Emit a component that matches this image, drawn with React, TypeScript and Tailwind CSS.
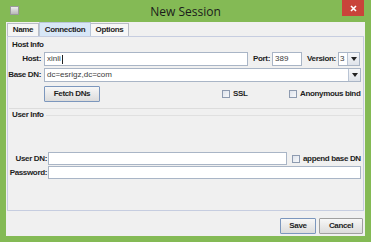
const label = "font-bold text-[8px] leading-[10px] tracking-[-0.35px] text-[#1e1e1e] whitespace-nowrap";
const field = "h-full bg-white border border-[#a9b5c6] text-[8px] leading-[12px] px-[2px] text-[#3a3a3a] whitespace-nowrap overflow-hidden";

function Arrow() {
  return (
    <div className="w-[12px] h-full flex items-center justify-center bg-gradient-to-b from-[#f6f7f9] to-[#dfe3ea] border-l border-[#b9c4d4]">
      <svg width="6" height="4" viewBox="0 0 6 4">
        <path d="M0 0 L6 0 L3 4 Z" fill="#222" />
      </svg>
    </div>
  );
}

function Check({ text, className = "" }: { text: string; className?: string }) {
  return (
    <div className={`flex items-center gap-[3px] ${className}`}>
      <div className="w-[8px] h-[8px] border border-[#8e9bb0] bg-gradient-to-br from-[#dfe4ec] to-[#f7f8fa]" />
      <span className={label}>{text}</span>
    </div>
  );
}

function Button({ text, width, primary }: { text: string; width: string; primary?: boolean }) {
  return (
    <div
      className={`${width} h-[16px] flex items-center justify-center bg-gradient-to-b from-[#f7f7f7] to-[#dcdcdc] border ${
        primary ? "border-[#7c97bd]" : "border-[#a0a0a0]"
      } rounded-[1px]`}
    >
      <span className={label}>{text}</span>
    </div>
  );
}

export default function App() {
  return (
    <div className="w-[371px] h-[242px] bg-[#84ba55] flex flex-col overflow-hidden font-['Liberation_Sans',sans-serif]">
      {/* title bar */}
      <div className="h-[22px] grid grid-cols-[1fr_auto_1fr]">
        <div className="flex items-start pl-[10px] pt-[6px]">
          <div className="w-[9px] h-[9px] bg-gradient-to-b from-[#eeeeee] to-[#b8b8b8] border border-[#9a9a9a]" />
        </div>
        <div className="flex items-center pt-[1px] font-['Open_Sans',sans-serif] text-[12px] text-[#1b1b1b]">
          New Session
        </div>
        <div className="flex justify-end pr-[7px]">
          <div className="w-[22px] h-[16px] bg-[#c9443a] flex items-center justify-center">
            <svg width="7" height="7" viewBox="0 0 7 7">
              <path d="M1 1 L6 6 M6 1 L1 6" stroke="#fff" strokeWidth="1.6" />
            </svg>
          </div>
        </div>
      </div>

      {/* body */}
      <div className="mx-[6px] h-[214px] bg-[#f0f0f0] flex flex-col">
        {/* tabs */}
        <div className="h-[14px] flex items-end pl-[1px]">
          <div className="w-[32px] h-[13px] border border-b-0 border-[#b9bdc6] bg-[#f5f5f5] flex items-center justify-center">
            <span className={label}>Name</span>
          </div>
          <div className="w-[52px] h-[14px] border border-b-0 border-[#b9c6d8] bg-[#d8e7f7] flex items-center justify-center">
            <span className={label}>Connection</span>
          </div>
          <div className="w-[38px] h-[13px] border border-b-0 border-l-0 border-[#b9bdc6] bg-[#f7f7f7] flex items-center justify-center">
            <span className={label}>Options</span>
          </div>
        </div>

        {/* panel */}
        <div className="mx-[1px] h-[175px] border border-[#c6cde0] flex flex-col">
          <div className="flex pl-[4px] pt-[3px]">
            <span className={label}>Host Info</span>
          </div>

          <div className="mt-[2px] h-[14px] flex items-center">
            <span className={`${label} w-[33px] text-right`}>Host:</span>
            <div className={`${field} ml-[3px] w-[204px] border-[#9da3ad] flex items-center`}>
              xinli<span className="w-px h-[9px] bg-[#222] ml-[1px]" />
            </div>
            <span className={`${label} w-[24px] text-right pr-[2px]`}>Port:</span>
            <div className={`${field} w-[30px]`}>389</div>
            <span className={`${label} ml-[5px] w-[31px]`}>Version:</span>
            <div className="h-full w-[22px] flex border border-[#a9b5c6] bg-white">
              <div className="flex-1 text-[8px] leading-[12px] px-[1px] text-[#3a3a3a]">3</div>
              <Arrow />
            </div>
          </div>

          <div className="mt-[2px] h-[14px] flex items-center">
            <span className={`${label} w-[33px] text-right`}>Base DN:</span>
            <div className="ml-[3px] w-[317px] h-full flex border border-[#a9b5c6] bg-white">
              <div className="flex-1 text-[8px] leading-[12px] px-[2px] text-[#3a3a3a]">dc=esrigz,dc=com</div>
              <Arrow />
            </div>
          </div>

          <div className="mt-[4px] h-[16px] flex items-center">
            <div className="ml-[36px]">
              <Button text="Fetch DNs" width="w-[56px]" primary />
            </div>
            <Check text="SSL" className="ml-[122px] w-[67px]" />
            <Check text="Anonymous bind" />
          </div>

          <div className="mt-[6px] mx-[1px] h-px bg-[#dcdcdc]" />
          <div className="mt-[1px] flex items-center pl-[4px] gap-[2px]">
            <span className={label}>User Info</span>
            <div className="flex-1 h-px bg-[#e0e0e0] mt-[1px]" />
          </div>

          <div className="mt-[32px] h-[13px] flex items-center">
            <span className={`${label} w-[39px] text-right`}>User DN:</span>
            <div className={`${field} ml-[1px] w-[239px]`} />
            <Check text="append base DN" className="ml-[5px]" />
          </div>
          <div className="mt-[1px] h-[13px] flex items-center">
            <span className={`${label} w-[39px] text-right`}>Password:</span>
            <div className={`${field} ml-[1px] w-[313px]`} />
          </div>
        </div>

        {/* buttons */}
        <div className="flex-1 flex justify-end items-start pt-[7px] pr-[2px] gap-[3px]">
          <Button text="Save" width="w-[36px]" primary />
          <Button text="Cancel" width="w-[44px]" />
        </div>
      </div>
    </div>
  );
}
